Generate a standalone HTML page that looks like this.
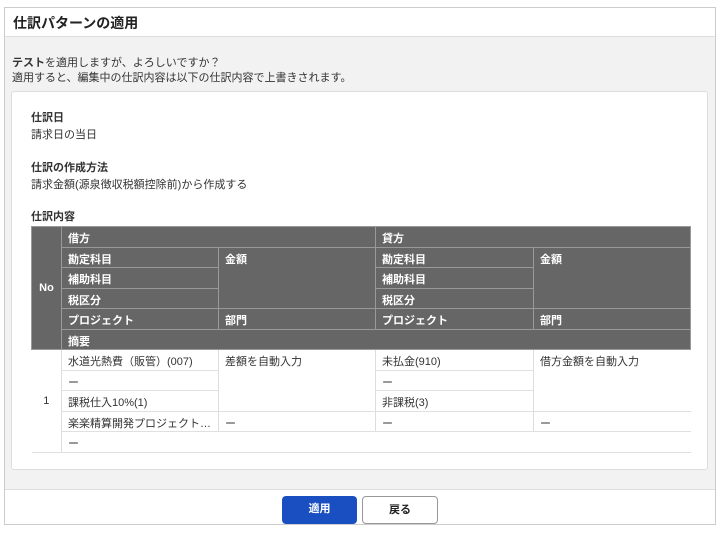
<!DOCTYPE html>
<html><head><meta charset="utf-8"><style>
*{margin:0;padding:0;box-sizing:border-box}
body{width:721px;height:534px;background:#fff;font-family:"Liberation Sans","Noto Sans CJK JP",sans-serif;font-size:11px;color:#333;position:relative;overflow:hidden}
.box{position:absolute;left:4px;top:7px;width:712px;height:518px;border:1px solid #ccc;background:#f2f2f2;overflow:hidden}
.hdr{position:absolute;left:0;top:0;width:710px;height:29px;background:#fff;border-bottom:1px solid #ddd;font-size:14px;font-weight:bold;padding:5px 0 0 8px;color:#222}
.msg{position:absolute;left:7px;top:48px;line-height:15px}
.card{position:absolute;left:6px;top:83px;width:697px;height:379px;background:#fff;border:1px solid #ddd;border-radius:3px}
.lbl{position:absolute;left:19px;font-weight:bold}
.val{position:absolute;left:19px}
table{position:absolute;left:19px;top:134px;border-collapse:collapse;width:659px;table-layout:fixed}
td,th{height:20.5px;padding:0 6px;text-align:left;vertical-align:middle;font-size:11px;white-space:nowrap;overflow:hidden;text-overflow:ellipsis}
th{background:#666;color:#fff;border:1px solid #999;font-weight:bold;vertical-align:top;padding-top:3px}
td{border-bottom:1px solid #e0e0e0;border-left:1px solid #ddd;vertical-align:top;padding-top:3px}
.btn{position:absolute;top:488px;height:28px;border-radius:4px;font-weight:bold;font-size:11px;text-align:center;line-height:27px}
.foot{position:absolute;left:0;top:481px;width:710px;height:37px;background:#fff;border-top:1px solid #ddd}
</style></head><body>
<div class="box">
<div class="hdr">仕訳パターンの適用</div>
<div class="msg"><b>テスト</b>を適用しますが、よろしいですか？<br>適用すると、編集中の仕訳内容は以下の仕訳内容で上書きされます。</div>
<div class="card">
<div class="lbl" style="top:17px">仕訳日</div>
<div class="val" style="top:34px">請求日の当日</div>
<div class="lbl" style="top:67px">仕訳の作成方法</div>
<div class="val" style="top:84px">請求金額(源泉徴収税額控除前)から作成する</div>
<div class="lbl" style="top:116px">仕訳内容</div>
<table>
<colgroup><col style="width:30px"><col style="width:157px"><col style="width:157px"><col style="width:158px"><col style="width:157px"></colgroup>
<tr><th rowspan="6" style="vertical-align:middle;text-align:center;padding:0">No</th><th colspan="2">借方</th><th colspan="2">貸方</th></tr>
<tr><th>勘定科目</th><th rowspan="3">金額</th><th>勘定科目</th><th rowspan="3">金額</th></tr>
<tr><th>補助科目</th><th>補助科目</th></tr>
<tr><th>税区分</th><th>税区分</th></tr>
<tr><th>プロジェクト</th><th>部門</th><th>プロジェクト</th><th>部門</th></tr>
<tr><th colspan="4">摘要</th></tr>
<tr><td rowspan="5" style="border-left:none;text-align:center;vertical-align:middle;padding:0">1</td><td>水道光熱費（販管）(007)</td><td rowspan="3">差額を自動入力</td><td>未払金(910)</td><td rowspan="3">借方金額を自動入力</td></tr>
<tr><td>ー</td><td>ー</td></tr>
<tr><td>課税仕入10%(1)</td><td>非課税(3)</td></tr>
<tr><td>楽楽精算開発プロジェクト(1…</td><td>ー</td><td>ー</td><td>ー</td></tr>
<tr><td colspan="4">ー</td></tr>
</table>
</div>
<div class="foot"></div>
<div class="btn" style="left:277px;width:75px;background:#1a4fc2;color:#fff">適用</div>
<div class="btn" style="left:357px;width:76px;background:#fff;border:1px solid #999;color:#222">戻る</div>
</div>
</body></html>
